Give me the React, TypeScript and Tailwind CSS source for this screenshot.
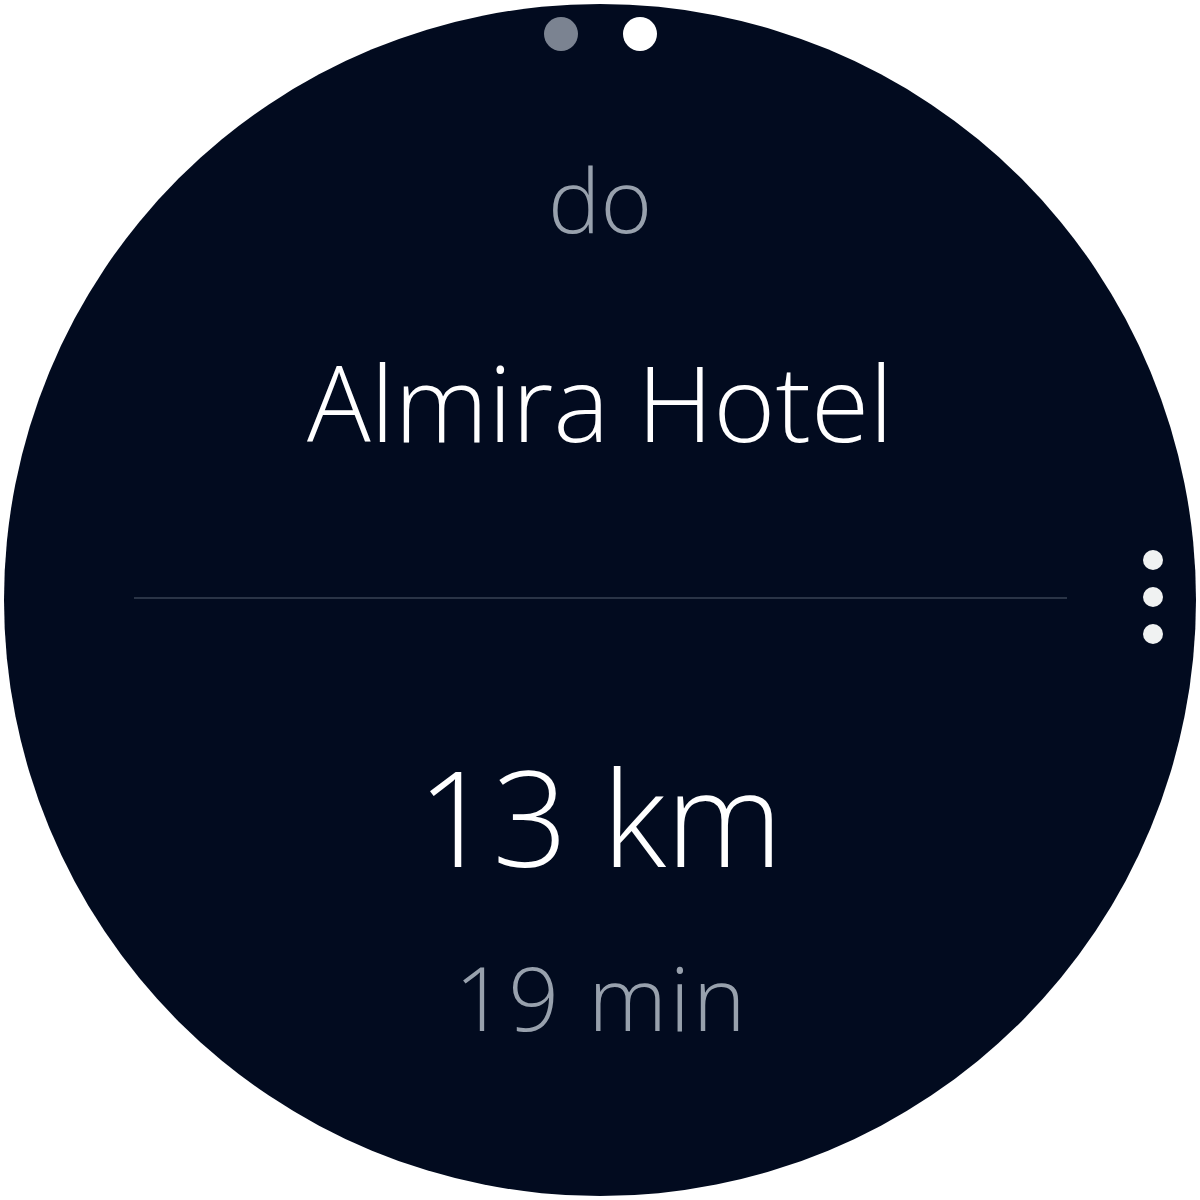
export default function App() {
  return (
    <div className="w-[1200px] h-[1200px] bg-white flex items-center justify-center">
      {/* watch face */}
      <div
        className="relative w-[1192px] h-[1192px] rounded-full bg-[#020b1f] flex flex-col items-center pt-[13px] font-light text-center"
        style={{ fontFamily: '"Open Sans", "Noto Sans", sans-serif' }}
      >
        {/* page indicator */}
        <div className="flex gap-[45px] h-[34px]">
          <span className="w-[34px] h-[34px] rounded-full bg-[#7b8391]" />
          <span className="w-[34px] h-[34px] rounded-full bg-white" />
        </div>

        <div className="mt-[104px] text-[88px] leading-none text-[#98a1ad]">do</div>
        <div className="mt-[105px] text-[106px] leading-none text-white">Almira Hotel</div>

        <div className="mt-[143px] w-[933px] h-[2px] bg-[#2a3446]" />

        <div className="mt-[151px] text-[132px] leading-none text-white">13 km</div>
        <div className="mt-[70px] pl-[3px] text-[89px] leading-none tracking-[3px] text-[#98a1ad]">19 min</div>

        {/* more options */}
        <div className="absolute right-[33px] top-[546px] flex flex-col gap-[17px]">
          <span className="w-[20px] h-[20px] rounded-full bg-[#f0f2f2]" />
          <span className="w-[20px] h-[20px] rounded-full bg-[#f0f2f2]" />
          <span className="w-[20px] h-[20px] rounded-full bg-[#f0f2f2]" />
        </div>
      </div>
    </div>
  )
}
